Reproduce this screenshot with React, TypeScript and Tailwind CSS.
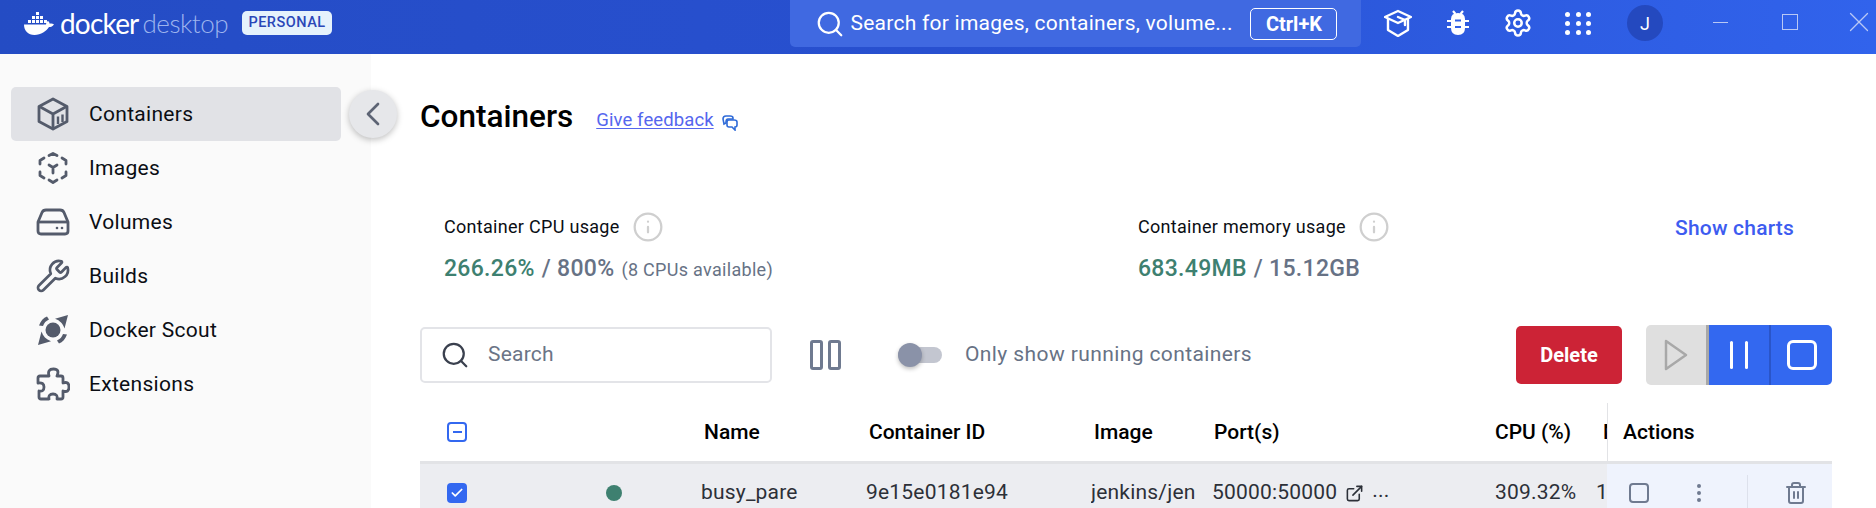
import React from 'react';
import { Check, ChevronLeft, EllipsisVertical, ExternalLink, Info, Search, Settings, Trash2, Wrench, X } from 'lucide-react';

const font = 'font-["Roboto","Liberation_Sans",sans-serif]';
const tableCols = 'grid-cols-[281px_165px_225px_121px_283px_101px_11px_225px]';

function ContainersIcon() {
  return (
    <svg width="32" height="34" viewBox="0 0 32 34" fill="none" stroke="#545b6b" strokeWidth="2.8" strokeLinejoin="round">
      <path d="M16 2 30 9.500v15L16 32 2 24.500v-15z" />
      <path d="M2.500 9.500 16 17l13.500-7.500M16 17v15" />
      <path d="M21 19.500v7.500M25.500 17.500v7.500" strokeWidth="2.400" />
    </svg>
  );
}

function ImagesIcon() {
  return (
    <svg width="32" height="34" viewBox="0 0 32 34" fill="none" stroke="#545b6b" strokeWidth="2.800" strokeLinejoin="round" strokeLinecap="round">
      <path d="M12 4.500 16 2.500l4 2M3 13V9.500l4-2.500M25 7l4 2.500V13M3 21v3.500L7 27M29 21v3.500L25 27M12 29l4 2.500 4-2.500" />
      <path d="M12 14l4 2.500 4-2.500M16 16.500V22" />
    </svg>
  );
}

function VolumesIcon() {
  return (
    <svg width="34" height="28" viewBox="0 0 34 28" fill="none" stroke="#545b6b" strokeWidth="2.800" strokeLinejoin="round">
      <path d="M2 14 6 4.500Q7 2 10 2h14q3 0 4 2.500L32 14v9q0 3-3 3H5q-3 0-3-3z" />
      <path d="M2 14h30" />
      <circle cx="21" cy="20" r="1.300" fill="#545b6b" stroke="none" />
      <circle cx="26" cy="20" r="1.300" fill="#545b6b" stroke="none" />
    </svg>
  );
}

function ScoutIcon() {
  return (
    <svg width="32" height="32" viewBox="0 0 32 32" fill="#545b6b">
      <circle cx="16" cy="16" r="7.500" />
      <path d="M31 1l-3.500 13.500C26 10 23 6.500 18 4.800zM1 31l3.500-13.500C6 22 9 25.500 14 27.200z" />
      <path d="M2 11.500C3.500 7 6.500 3.800 10 2.500l2 3c-3 1.300-5 3.500-6 6.500zM30 20.500c-1.500 4.500-4.500 7.700-8 9l-2-3c3-1.300 5-3.500 6-6.500z" />
    </svg>
  );
}

function PuzzleIcon() {
  return (
    <svg width="34" height="34" viewBox="0 0 34 34" fill="none" stroke="#545b6b" strokeWidth="2.800" strokeLinejoin="round">
      <path d="M8 9h5q-2-7 4.500-7T21 9h4q2 0 2 2v5q6-2 6 4t-6 4v6q0 2-2 2h-4q1-5-4-5t-4 5H5q-2 0-2-2v-6q5 1 5-4t-6-4V11q0-2 2-2z" />
    </svg>
  );
}

function WhaleLogo() {
  return (
    <svg width="30" height="23" viewBox="0 0 30 23" fill="#fff">
      <rect x="12" y="0" width="3" height="3" />
      <rect x="8" y="4" width="3" height="3" />
      <rect x="12" y="4" width="3" height="3" />
      <rect x="16" y="4" width="3" height="3" />
      <rect x="4" y="8" width="3" height="3" />
      <rect x="8" y="8" width="3" height="3" />
      <rect x="12" y="8" width="3" height="3" />
      <rect x="16" y="8" width="3" height="3" />
      <rect x="20" y="8" width="3" height="3" />
      <path d="M0 12.500h22c.2-1.600 1-3 2-3.500 1 .7 1.600 1.800 1.700 2.800 1-.4 2.500-.4 4.300.4-1 2-3 2.800-5 2.800C22.500 19 17 23 10.500 23 4 23 0 18.500 0 12.500z" />
    </svg>
  );
}

function CapIcon() {
  return (
    <svg width="28" height="28" viewBox="0 0 28 28" fill="none" stroke="#fff" strokeWidth="2.400" strokeLinejoin="round" strokeLinecap="round">
      <path d="M4 10v11l10 6 10-6V10" />
      <path d="M14 2 27 8 14 14 1 8z" />
      <path d="M14 8l7 3v5" />
    </svg>
  );
}

function BugIcon() {
  return (
    <svg width="22" height="26" viewBox="0 0 22 26" fill="none">
      <path d="M6 1l2.500 3M16 1l-2.500 3M0 11h22M0 17h22" stroke="#fff" strokeWidth="2.200" />
      <path d="M4 9q0-6 7-6t7 6v9q0 7-7 7t-7-7z" fill="#fff" />
      <path d="M8 10.500h6M8 17h6" stroke="#3060e6" strokeWidth="2" />
    </svg>
  );
}

const nav = [
  { label: 'Containers', icon: <ContainersIcon />, active: true },
  { label: 'Images', icon: <ImagesIcon /> },
  { label: 'Volumes', icon: <VolumesIcon /> },
  { label: 'Builds', icon: <Wrench size={36} color="#545b6b" strokeWidth={1.800} /> },
  { label: 'Docker Scout', icon: <ScoutIcon /> },
  { label: 'Extensions', icon: <PuzzleIcon /> },
];

function Sidebar() {
  return (
    <aside className="relative w-[371px] shrink-0 bg-[#fafafa] pl-[11px] pr-[30px] pt-[33px]">
      <nav className="flex flex-col">
        {nav.map((item) => (
          <div
            key={item.label}
            className={`flex h-[54px] items-center rounded-[5px] text-[21px] tracking-[0.3px] text-[#0b0e14] ${item.active ? 'bg-[#e1e2e6]' : ''}`}
          >
            <span className="flex w-[78px] justify-center pl-[6px]">{item.icon}</span>
            <span className="pt-[2px]">{item.label}</span>
          </div>
        ))}
      </nav>
      <button className="absolute left-[349px] top-[36px] flex h-12 w-12 items-center justify-center rounded-full bg-[#e6e7ea] shadow-[0_2px_6px_rgba(0,0,0,0.25)]">
        <ChevronLeft size={40} color="#5d6474" strokeWidth={1.600} />
      </button>
    </aside>
  );
}

function Header() {
  return (
    <header className="flex h-[54px] items-center bg-gradient-to-r from-[#244cc4] via-[#2850d0] to-[#3163ec] pb-[8px] pl-[24px]">
      <WhaleLogo />
      <span className="ml-[6px] text-[28px] leading-none tracking-[-0.8px] text-white font-['Lato',sans-serif]">docker</span>
      <span className="ml-[4px] w-[85px] whitespace-nowrap text-[26px] font-light leading-none tracking-[-0.5px] text-[#9db4ee] font-['Lato',sans-serif]">desktop</span>
      <span className="ml-[14px] flex h-6 w-[91px] items-center justify-center rounded-[5px] bg-[#e5f2fc] text-[14.500px] font-medium tracking-[0.5px] text-[#2a47b8]">PERSONAL</span>

      <div className="ml-[458px] flex h-[47px] w-[571px] self-start items-center rounded-b-[5px] bg-[#4069e1] pl-[25px]">
        <Search size={30} color="#fff" strokeWidth={1.800} />
        <span className="ml-[5px] w-[400px] text-[21px] tracking-[0.25px] text-white">Search for images, containers, volume...</span>
        <span className="flex h-8 w-[87px] items-center justify-center rounded-[5px] border border-white text-[20px] font-bold text-white">Ctrl+K</span>
      </div>

      <div className="ml-[23px] flex items-center text-white">
        <CapIcon />
        <span className="ml-[35px]"><BugIcon /></span>
        <Settings size={30} strokeWidth={2} className="ml-[34px]" />
        <div className="ml-[32px] grid grid-cols-3 gap-x-[5.500px] gap-y-[4px]">
          {Array.from({ length: 9 }).map((_, i) => (
            <span key={i} className="h-[5px] w-[5px] rounded-full bg-white" />
          ))}
        </div>
      </div>
      <span className="ml-[36px] flex h-9 w-9 items-center justify-center rounded-full bg-[#2449bf] text-[18px] text-white">J</span>
      <div className="-mt-[2px] ml-[50px] flex items-center">
        <span className="h-px w-[15px] bg-[#b9c8f5]" />
        <span className="ml-[54px] h-4 w-4 border border-[#b9c8f5]" />
        <X size={34} color="#b9c8f5" strokeWidth={0.900} className="ml-[44px]" />
      </div>
    </header>
  );
}

function Stat({ title, children, w }: { title: string; children: React.ReactNode; w: string }) {
  return (
    <div className={w}>
      <div className="flex h-[29px] items-center gap-[12px] text-[18px] tracking-[0.3px] text-[#0b0e14]">
        {title}
        <Info size={32} color="#cfcfcf" strokeWidth={1.700} />
      </div>
      <div className="mt-[14px] flex items-baseline text-[23px] font-medium leading-[27px] tracking-[0.3px] text-[#677285]">{children}</div>
    </div>
  );
}

function Toolbar() {
  return (
    <div className="mt-[42px] flex h-[60px] items-center">
      <div className="flex h-[56px] w-[352px] items-center rounded-[5px] border-2 border-[#e3e4e8] pl-[18px]">
        <Search size={30} color="#3a404e" strokeWidth={1.800} />
        <span className="ml-[18px] text-[21px] tracking-[0.2px] text-[#6b7486]">Search</span>
      </div>
      <div className="ml-[38px] flex gap-[5px]">
        <span className="h-[30px] w-[13px] rounded-[3px] border-[3px] border-[#6f7a90]" />
        <span className="h-[30px] w-[13px] rounded-[3px] border-[3px] border-[#6f7a90]" />
      </div>
      <div className="relative ml-[57px] h-[16px] w-[44px] rounded-full bg-[#c3c6d0]">
        <span className="absolute left-0 -top-[4px] h-6 w-6 rounded-full bg-[#8a92a8] shadow-[0_2px_4px_rgba(0,0,0,0.25)]" />
      </div>
      <span className="ml-[23px] text-[21px] tracking-[0.4px] text-[#677285]">Only show running containers</span>
      <button className="ml-auto h-[58px] w-[106px] rounded-[5px] bg-[#cc2336] text-[20px] font-bold text-white">Delete</button>
      <div className="ml-[24px] flex h-[60px] w-[186px] overflow-hidden rounded-[5px]">
        <span className="flex w-[63px] items-center justify-center border-r-[3px] border-[#a8a8a8] bg-[#dfdfdf]">
          <svg width="24" height="32" viewBox="0 0 24 32" fill="none" stroke="#a8a8a8" strokeWidth="2.500" strokeLinejoin="round">
            <path d="M2 2 22 16 2 30z" />
          </svg>
        </span>
        <span className="flex w-[62px] items-center justify-center gap-[12px] border-r-2 border-[#2a55c9] bg-[#3368f0]">
          <span className="h-7 w-[3px] rounded-full bg-white" />
          <span className="h-7 w-[3px] rounded-full bg-white" />
        </span>
        <span className="flex w-[61px] items-center justify-center bg-[#3368f0]">
          <span className="h-[30px] w-[30px] rounded-[6px] border-[3px] border-white" />
        </span>
      </div>
    </div>
  );
}

function Table() {
  return (
    <div className="mt-[18px]">
      <div className={`grid h-[61px] ${tableCols} items-center border-b-[3px] border-[#e2e3e6] text-[21px] font-medium text-black`}>
        <span className="pl-[27px]">
          <span className="flex h-5 w-5 items-center justify-center rounded-[4px] border-2 border-[#3368f0]">
            <span className="h-[2px] w-[9px] bg-[#3368f0]" />
          </span>
        </span>
        <span className="pl-[3px] pt-[2px]">Name</span>
        <span className="pl-[3px] pt-[2px]">Container ID</span>
        <span className="pl-[3px] pt-[2px]">Image</span>
        <span className="pl-[2px] pt-[2px]">Port(s)</span>
        <span className="pt-[2px]">CPU (%)</span>
        <span className="overflow-hidden whitespace-nowrap pl-[7px] pt-[2px]">Memory</span>
        <span className="flex h-full items-center border-l border-[#e2e3e6] pl-[15px] pt-[2px]">Actions</span>
      </div>
      <div className={`grid h-[58px] ${tableCols} items-center bg-[#ecedf1] text-[21px] tracking-[0.2px] text-[#2c3038]`}>
        <span className="flex items-center pl-[27px]">
          <span className="flex h-5 w-5 items-center justify-center rounded-[4px] bg-[#3368f0]">
            <Check size={14} color="#fff" strokeWidth={3} />
          </span>
          <span className="ml-[139px] h-4 w-4 rounded-full bg-[#3e8070]" />
        </span>
        <span>busy_pare</span>
        <span>9e15e0181e94</span>
        <span className="w-[105px] overflow-hidden whitespace-nowrap">jenkins/jenkins</span>
        <span className="flex items-center gap-[8px] whitespace-nowrap">
          50000:50000
          <ExternalLink size={19} />
          <span className="-mt-1">...</span>
        </span>
        <span>309.32%</span>
        <span className="overflow-hidden">1</span>
        <span className="flex h-full items-center bg-[#eff3fd]">
          <span className="ml-[22px] h-5 w-5 rounded-[4px] border-2 border-[#6f7a90]" />
          <EllipsisVertical size={24} color="#6f7a90" className="ml-[38px]" />
          <span className="ml-[36px] h-9 w-px bg-[#dde1ec]" />
          <Trash2 size={24} color="#6f7a90" className="ml-[36px]" />
        </span>
      </div>
    </div>
  );
}

function Main() {
  return (
    <main className="min-w-0 flex-1 pl-[49px] pr-[44px]">
      <div className="flex items-center pt-[43px]">
        <h1 className="text-[31.500px] font-medium leading-[40px] text-black">Containers</h1>
        <a className="ml-[23px] mt-[8px] text-[18.500px] tracking-[0.1px] text-[#5566ee] underline underline-offset-2">Give feedback</a>
        <svg className="ml-[7px] mt-[10px]" width="17" height="17" viewBox="0 0 17 17" fill="none" stroke="#2f6bd8" strokeWidth="1.600">
          <path d="M2 5q0-3 3-3h4q3 0 3 2v1H7Q5 5 5 8v1l-2 1z" />
          <path d="M6 8q0-2 2-2h5q3 0 3 2v3q0 2-2 2v3l-3-3H8q-2 0-2-2z" />
        </svg>
      </div>

      <div className="mt-[75px] flex pl-[24px]">
        <Stat title="Container CPU usage" w="w-[694px]">
          <span className="text-[#3e8070]">266.26%</span>
          <span className="ml-[7px]">/ 800%</span>
          <span className="ml-[7px] text-[18px] font-normal">(8 CPUs available)</span>
        </Stat>
        <Stat title="Container memory usage" w="w-[537px]">
          <span className="text-[#3e8070]">683.49MB</span>
          <span className="ml-[7px]">/ 15.12GB</span>
        </Stat>
        <a className="mt-[1px] text-[21px] font-medium tracking-[0.2px] text-[#3d5cf0]">Show charts</a>
      </div>

      <Toolbar />
      <Table />
    </main>
  );
}

export default function App() {
  return (
    <div className={`h-[508px] w-[1876px] overflow-hidden bg-white ${font}`}>
      <Header />
      <div className="flex h-[454px]">
        <Sidebar />
        <Main />
      </div>
    </div>
  );
}
